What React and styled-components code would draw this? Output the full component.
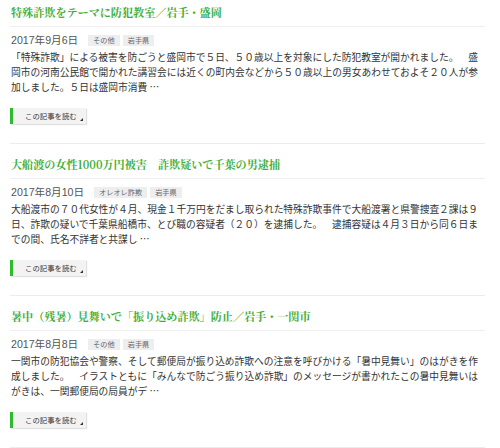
import React from "react";
import styled, { createGlobalStyle } from "styled-components";

const GlobalStyle = createGlobalStyle`
  html, body {
    margin: 0;
    padding: 0;
    background: #fff;
  }
  body {
    font-family: "Liberation Sans", "Noto Sans CJK JP", sans-serif;
    color: #333;
    text-spacing-trim: space-all;
  }
`;

const Page = styled.div`
  width: 475px;
  padding: 0 15px 0 10px;
`;

const Article = styled.article`
  padding: 12px 0 19px;
  border-bottom: 1px solid #ececec;

  &:first-child {
    padding-top: 4px;
  }
`;

const Title = styled.h2`
  height: 16px;
  margin: 0;
  padding: 0 0 6px 1px;
  border-bottom: 1px solid #efefef;
  font-family: "Noto Serif CJK JP", "Liberation Serif", "Noto Sans CJK JP", serif;
  font-size: 11.1px;
  line-height: 16px;
  font-weight: bold;
  color: #3fae36;
  white-space: nowrap;
  text-spacing-trim: space-all;
`;

const Meta = styled.div`
  display: flex;
  align-items: center;
  gap: 3px;
  margin-top: 6px;
  height: 14px;
  padding-left: 1px;
`;

const DateText = styled.span`
  font-size: 10.6px;
  line-height: 14px;
  color: #555;
  margin-right: 7px;
`;

const Tag = styled.span`
  display: inline-flex;
  align-items: center;
  height: 11px;
  padding: 0 5px;
  background: #eeeeee;
  color: #666;
  font-size: 7.2px;
  line-height: 11px;
`;

const Body = styled.p`
  width: 473px;
  margin: 3px 0 0;
  padding-left: 1px;
  font-family: "Noto Sans CJK JP", sans-serif;
  font-size: 9.74px;
  line-height: 15px;
  color: #333;
  word-break: break-all;
  text-spacing-trim: space-all;
`;

const ReadMore = styled.a`
  position: relative;
  display: flex;
  align-items: center;
  box-sizing: border-box;
  height: 16px;
  width: 76px;
  margin-top: 13px;
  padding-left: 12px;
  border-left: 3px solid #2fba2f;
  background: #f3f3f3;
  box-shadow: 1px 1px 1px rgba(0, 0, 0, 0.12);
  color: #333;
  font-family: "Noto Sans CJK JP", sans-serif;
  font-size: 7.4px;
  line-height: 16px;
  text-decoration: none;

  &::after {
    content: "";
    position: absolute;
    right: 3px;
    bottom: 3px;
    border-style: solid;
    border-width: 0 0 3px 3px;
    border-color: transparent transparent #333 transparent;
  }
`;

const articles = [
  {
    title: "特殊詐欺をテーマに防犯教室／岩手・盛岡",
    date: "2017年9月6日",
    tags: ["その他", "岩手県"],
    body:
      "「特殊詐欺」による被害を防ごうと盛岡市で５日、５０歳以上を対象にした防犯教室が開かれました。　盛岡市の河南公民館で開かれた講習会には近くの町内会などから５０歳以上の男女あわせておよそ２０人が参加しました。５日は盛岡市消費 …",
  },
  {
    title: "大船渡の女性1000万円被害　詐欺疑いで千葉の男逮捕",
    date: "2017年8月10日",
    tags: ["オレオレ詐欺", "岩手県"],
    body:
      "大船渡市の７０代女性が４月、現金１千万円をだまし取られた特殊詐欺事件で大船渡署と県警捜査２課は９日、詐欺の疑いで千葉県船橋市、とび職の容疑者（２０）を逮捕した。　逮捕容疑は４月３日から同６日までの間、氏名不詳者と共謀し …",
  },
  {
    title: "暑中（残暑）見舞いで「振り込め詐欺」防止／岩手・一関市",
    date: "2017年8月8日",
    tags: ["その他", "岩手県"],
    body:
      "一関市の防犯協会や警察、そして郵便局が振り込め詐欺への注意を呼びかける「暑中見舞い」のはがきを作成しました。　イラストともに「みんなで防ごう振り込め詐欺」のメッセージが書かれたこの暑中見舞いはがきは、一関郵便局の局員がデ …",
  },
];

export default function App() {
  return (
    <>
      <GlobalStyle />
      <Page>
        {articles.map((a) => (
          <Article key={a.title}>
            <Title>{a.title}</Title>
            <Meta>
              <DateText>{a.date}</DateText>
              {a.tags.map((t) => (
                <Tag key={t}>{t}</Tag>
              ))}
            </Meta>
            <Body>{a.body}</Body>
            <ReadMore href="#">この記事を読む</ReadMore>
          </Article>
        ))}
      </Page>
    </>
  );
}
